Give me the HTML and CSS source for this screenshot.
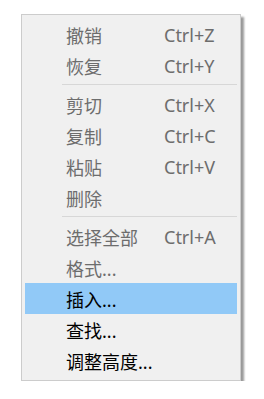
FILE: index.html
```html
<!DOCTYPE html>
<html lang="zh-cn">
	<head>
		<meta charset="utf-8" />
		<title>菜单</title>
		<link rel="stylesheet" href="styles.css">
	</head>
	<body>
		<ul class="menu">
			<li class="item disabled"><span class="label">撤销</span><span class="key">Ctrl+Z</span></li>
			<li class="item disabled"><span class="label">恢复</span><span class="key">Ctrl+Y</span></li>
			<li class="sep"></li>
			<li class="item disabled"><span class="label">剪切</span><span class="key">Ctrl+X</span></li>
			<li class="item disabled"><span class="label">复制</span><span class="key">Ctrl+C</span></li>
			<li class="item disabled"><span class="label">粘贴</span><span class="key">Ctrl+V</span></li>
			<li class="item disabled"><span class="label">删除</span></li>
			<li class="sep"></li>
			<li class="item disabled"><span class="label">选择全部</span><span class="key">Ctrl+A</span></li>
			<li class="item disabled"><span class="label">格式...</span></li>
			<li class="item active"><span class="label">插入...</span></li>
			<li class="item"><span class="label">查找...</span></li>
			<li class="item"><span class="label">调整高度...</span></li>
		</ul>
	</body>
</html>
```
FILE: styles.css
```css
*{
	padding:0;
	margin:0;
	list-style: none;
}
body {
	background-color: #fff;
	font-family: "Noto Sans", "Noto Sans CJK SC", sans-serif;
	font-size: 18px;
}
.menu {
	width: 220px;
	margin: 14px 0 0 21px;
	padding: 4px 0 4px;
	background-color: #f0f0f0;
	border: 1px solid #cccccc;
	box-shadow: 3px 3px 2px rgba(0,0,0,0.4);
	box-sizing: border-box;
}
.item {
	display: flex;
	align-items: center;
	height: 31px;
	margin: 0 3px;
	padding-left: 41px;
	color: #000;
}
.item.disabled {
	color: #6d6d6d;
}
.item.active {
	background-color: #91c9f7;
}
.label {
	width: 98px;
}
.sep {
	height: 1px;
	margin: 3px 3px 4px 40px;
	background-color: #d7d7d7;
}
```
